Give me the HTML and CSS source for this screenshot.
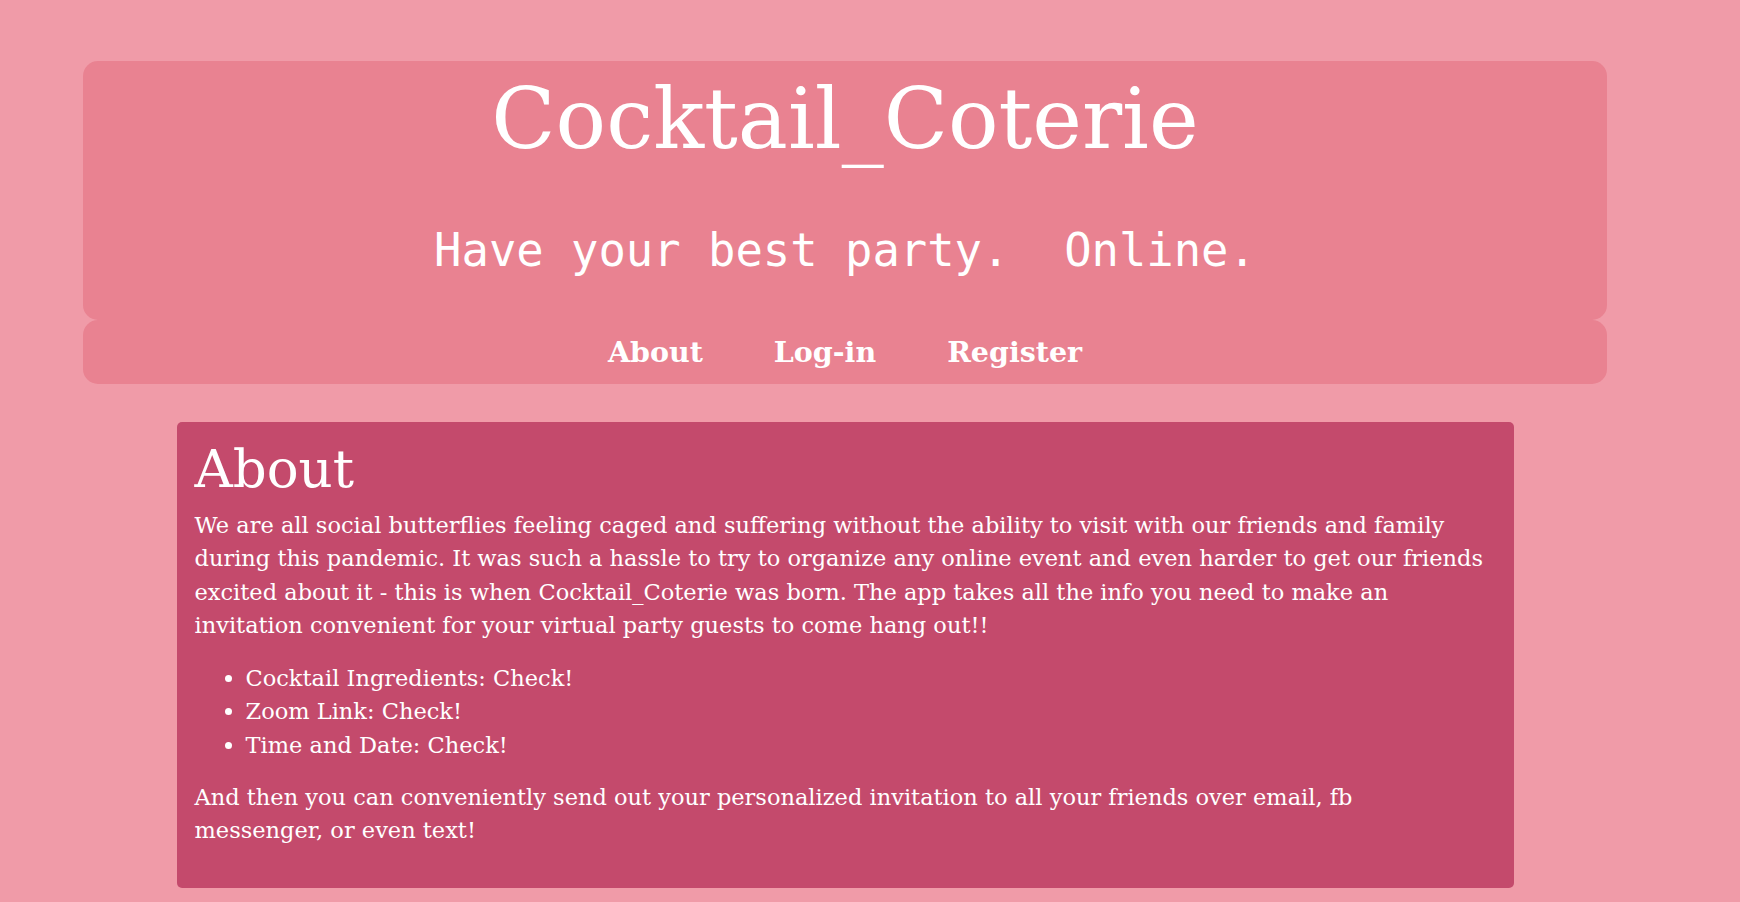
FILE: index.html
```html
<!DOCTYPE html>
<html lang="en">
<head>
<meta charset="utf-8">
<title>Cocktail_Coterie</title>
<link rel="stylesheet" href="styles.css">
</head>
<body>
  <div class="page">
    <header class="masthead">
      <h1 class="brand">Cocktail_Coterie</h1>
      <p class="tagline">Have your best party.&nbsp; Online.</p>
    </header>
    <nav class="topnav">
      <a class="navlink" href="#about">About</a>
      <a class="navlink" href="#login">Log-in</a>
      <a class="navlink" href="#register">Register</a>
    </nav>
    <main class="content">
      <section class="card" id="about">
        <h2 class="card-title">About</h2>
        <p class="card-text">We are all social butterflies feeling caged and suffering without the ability to visit with our friends and family during this pandemic. It was such a hassle to try to organize any online event and even harder to get our friends excited about it - this is when Cocktail_Coterie was born. The app takes all the info you need to make an invitation convenient for your virtual party guests to come hang out!!</p>
        <ul class="card-list">
          <li>Cocktail Ingredients: Check!</li>
          <li>Zoom Link: Check!</li>
          <li>Time and Date: Check!</li>
        </ul>
        <p class="card-text">And then you can conveniently send out your personalized invitation to all your friends over email, fb messenger, or even text!</p>
      </section>
    </main>
  </div>
</body>
</html>
```

FILE: styles.css
```css
html, body {
  margin: 0;
  padding: 0;
}

body {
  background: #f09ba8;
  color: #ffffff;
  font-family: "DejaVu Serif", "Liberation Serif", serif;
  min-height: 902px;
}

.page {
  padding: 61px 133px 0 83px;
}

.masthead {
  background: #e98291;
  border-radius: 15px;
  padding: 9px 20px 43px;
  text-align: center;
}

.brand {
  margin: 0;
  font-size: 84px;
  font-weight: normal;
  line-height: normal;
}

.tagline {
  margin: 56px 0 0;
  font-family: "DejaVu Sans Mono", "Liberation Mono", monospace;
  font-size: 45.5px;
  line-height: normal;
}

.topnav {
  background: #e98291;
  border-radius: 15px;
  display: flex;
  justify-content: center;
  gap: 71px;
  padding: 15px 0 15px;
}

.navlink {
  color: #ffffff;
  text-decoration: none;
  font-weight: bold;
  font-size: 28.5px;
  line-height: normal;
}

.content {
  display: flex;
  justify-content: center;
  padding: 38px 0 0 0;
}

.card {
  background: #c44a6c;
  border-radius: 5px;
  width: 1337px;
  box-sizing: border-box;
  padding: 16px 30px 40px 18px;
}

.card-title {
  margin: 0 0 10px;
  font-size: 53px;
  font-weight: normal;
  line-height: normal;
}

.card-text {
  margin: 0 0 20px;
  font-size: 22.5px;
  line-height: 33.3px;
}

.card-text:last-child {
  margin-bottom: 0;
}

.card-list {
  margin: 0 0 19px;
  padding-left: 51px;
  font-size: 22.5px;
  line-height: 33.3px;
}
```
